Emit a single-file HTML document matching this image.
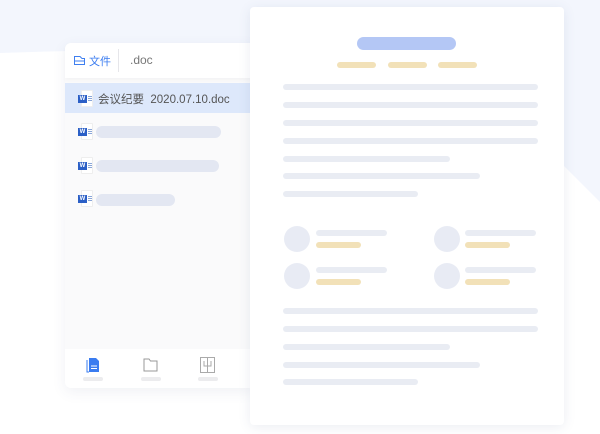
<!DOCTYPE html>
<html><head><meta charset="utf-8"><style>
*{margin:0;padding:0;box-sizing:border-box}
body{width:600px;height:434px;overflow:hidden;background:#fff;position:relative;font-family:"Liberation Sans","Noto Sans CJK SC",sans-serif}
.a{position:absolute}
.l{position:absolute;height:6px;border-radius:3px;background:#e9ecf3}
.y{position:absolute;height:6px;border-radius:3px;background:#f2e1b8}
.c{position:absolute;width:26px;height:26px;border-radius:50%;background:#e8ebf4}
.w{position:absolute;left:78px;width:15px;height:17px}
.w .p{position:absolute;left:3px;top:0;width:12px;height:17px;background:#fff;border:1px solid #eee;border-radius:1px}
.w .b{position:absolute;left:0;top:5px;width:9px;height:8px;background:#2b5fc6;color:#fff;font-size:6px;line-height:8px;text-align:center;font-weight:bold}
.w .s{position:absolute;left:10px;top:6px;width:4px;height:1px;background:#8aa6d8;box-shadow:0 2px #8aa6d8,0 4px #8aa6d8}
.bar{position:absolute;left:96px;height:12px;border-radius:6px;background:#e3e7f2}
</style></head><body>
<svg class="a" style="left:0;top:0" width="600" height="434"><path d="M0 0H600V202L564 166Q520 120 430 85Q300 45 120 50Q60 51 0 53Z" fill="#f3f6fd"/></svg>
<div class="a" style="left:65px;top:43px;width:190px;height:345px;background:#fafafb;border-radius:6px;box-shadow:0 4px 14px rgba(60,80,130,.08)"></div>
<div class="a" style="left:65px;top:43px;width:190px;height:35px;background:#fff;border-radius:6px 0 0 0;box-shadow:0 2px 4px rgba(0,0,0,.03)"></div>
<svg class="a" style="left:74px;top:56px" width="11" height="9"><path d="M.5 .5H6L8 2.5H10.5V8.5H.5Z M.5 5H10.5" fill="none" stroke="#3f7ff0"/></svg>
<div class="a" style="left:89px;top:53px;font-size:11px;color:#3a7cf0">文件</div>
<div class="a" style="left:118px;top:49px;width:1px;height:23px;background:#e6e6ea"></div>
<div class="a" style="left:130px;top:53px;font-size:12px;color:#777">.doc</div>
<div class="a" style="left:65px;top:83px;width:190px;height:30px;background:#dde8fb"></div>
<div class="w" style="top:90px"><div class="p"></div><div class="b">W</div><div class="s"></div></div>
<div class="a" style="left:98px;top:91px;font-size:11.5px;color:#555">会议纪要&nbsp; 2020.07.10.doc</div>
<div class="w" style="top:123px"><div class="p"></div><div class="b">W</div><div class="s"></div></div>
<div class="bar" style="top:126px;width:125px"></div>
<div class="w" style="top:157px"><div class="p"></div><div class="b">W</div><div class="s"></div></div>
<div class="bar" style="top:160px;width:123px"></div>
<div class="w" style="top:190px"><div class="p"></div><div class="b">W</div><div class="s"></div></div>
<div class="bar" style="top:194px;width:79px"></div>
<div class="a" style="left:65px;top:349px;width:190px;height:39px;background:#fff;border-radius:0 0 0 6px"></div>
<svg class="a" style="left:86px;top:357px" width="14" height="16"><path d="M3 1H10L13 4V15H3Z" fill="#3a7cf0"/><path d="M1 3V15H3" stroke="#3a7cf0" fill="none"/><path d="M5 9H11M5 11.5H11" stroke="#fff"/></svg>
<svg class="a" style="left:143px;top:358px" width="15" height="14"><path d="M1 1H6L7.5 3H14V13H1Z" fill="none" stroke="#999"/></svg>
<svg class="a" style="left:200px;top:357px" width="15" height="16"><rect x=".5" y=".5" width="14" height="15" fill="none" stroke="#aaa"/><path d="M7.5 1V15M4 4V9H7.5M11 4V9H7.5" stroke="#aaa" fill="none"/></svg>
<div class="a" style="left:83px;top:377px;width:20px;height:4px;border-radius:2px;background:#ececee"></div>
<div class="a" style="left:141px;top:377px;width:20px;height:4px;border-radius:2px;background:#ececee"></div>
<div class="a" style="left:198px;top:377px;width:20px;height:4px;border-radius:2px;background:#ececee"></div>
<div class="a" style="left:250px;top:7px;width:314px;height:418px;background:#fff;border-radius:4px;box-shadow:0 2px 12px rgba(60,80,130,.1)"></div>
<div class="a" style="left:357px;top:37px;width:99px;height:13px;border-radius:7px;background:#b4c7f5"></div>
<div class="y" style="left:337px;top:62px;width:39px"></div>
<div class="y" style="left:388px;top:62px;width:39px"></div>
<div class="y" style="left:438px;top:62px;width:39px"></div>
<div class="l" style="left:283px;top:84px;width:255px"></div>
<div class="l" style="left:283px;top:102px;width:255px"></div>
<div class="l" style="left:283px;top:120px;width:255px"></div>
<div class="l" style="left:283px;top:138px;width:255px"></div>
<div class="l" style="left:283px;top:156px;width:167px"></div>
<div class="l" style="left:283px;top:173px;width:197px"></div>
<div class="l" style="left:283px;top:191px;width:135px"></div>
<div class="c" style="left:284px;top:226px"></div>
<div class="l" style="left:316px;top:230px;width:71px"></div>
<div class="y" style="left:316px;top:242px;width:45px"></div>
<div class="c" style="left:434px;top:226px"></div>
<div class="l" style="left:465px;top:230px;width:71px"></div>
<div class="y" style="left:465px;top:242px;width:45px"></div>
<div class="c" style="left:284px;top:263px"></div>
<div class="l" style="left:316px;top:267px;width:71px"></div>
<div class="y" style="left:316px;top:279px;width:45px"></div>
<div class="c" style="left:434px;top:263px"></div>
<div class="l" style="left:465px;top:267px;width:71px"></div>
<div class="y" style="left:465px;top:279px;width:45px"></div>
<div class="l" style="left:283px;top:308px;width:255px"></div>
<div class="l" style="left:283px;top:326px;width:255px"></div>
<div class="l" style="left:283px;top:344px;width:167px"></div>
<div class="l" style="left:283px;top:362px;width:197px"></div>
<div class="l" style="left:283px;top:379px;width:135px"></div>
</body></html>
